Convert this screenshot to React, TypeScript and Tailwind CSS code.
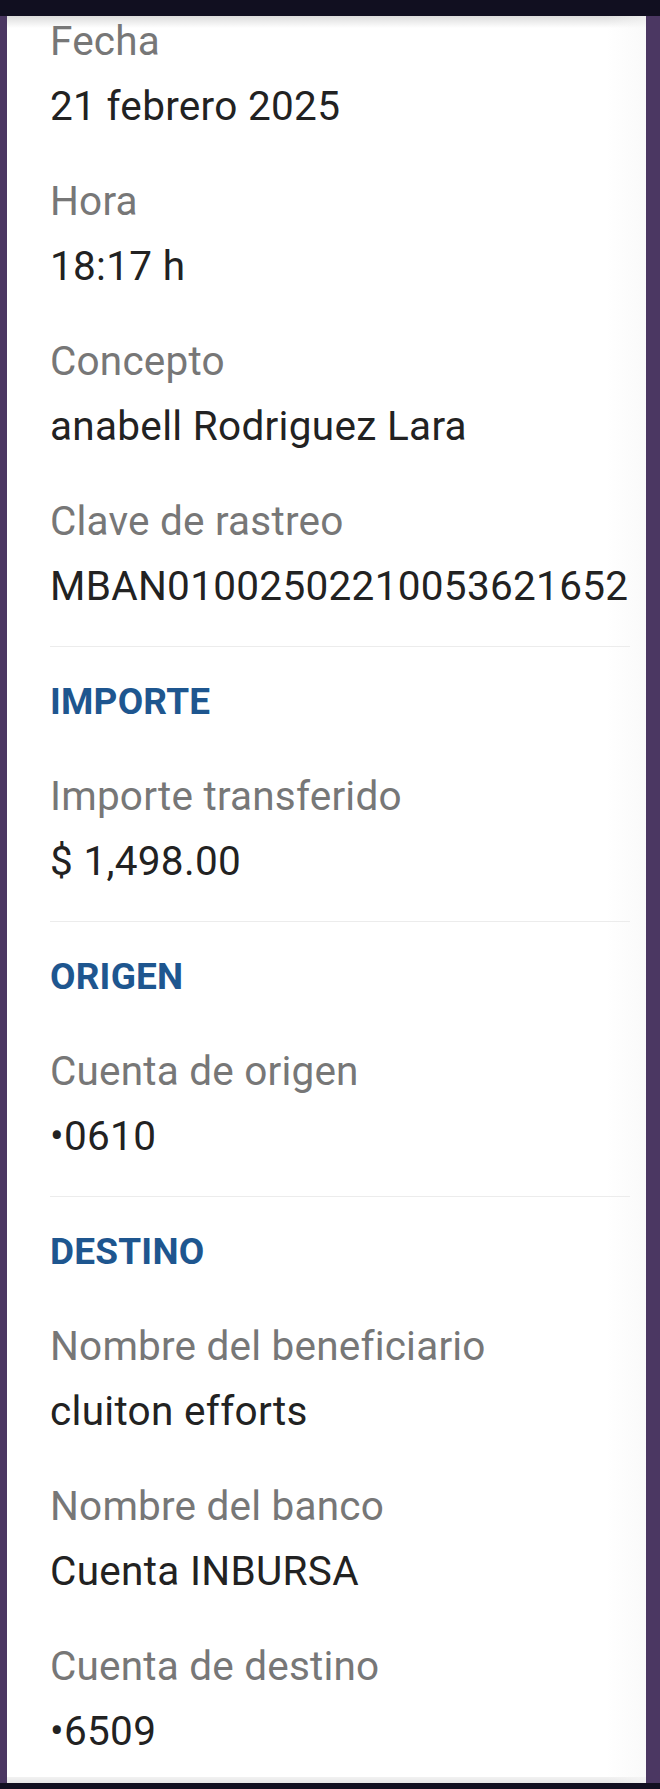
import React from 'react';

type Field = { label: string; value: string };

const general: Field[] = [
  { label: 'Fecha', value: '21 febrero 2025' },
  { label: 'Hora', value: '18:17 h' },
  { label: 'Concepto', value: 'anabell Rodriguez Lara' },
  { label: 'Clave de rastreo', value: 'MBAN01002502210053621652' },
];

const sections: { title: string; fields: Field[] }[] = [
  { title: 'IMPORTE', fields: [{ label: 'Importe transferido', value: '$ 1,498.00' }] },
  { title: 'ORIGEN', fields: [{ label: 'Cuenta de origen', value: '•0610' }] },
  {
    title: 'DESTINO',
    fields: [
      { label: 'Nombre del beneficiario', value: 'cluiton efforts' },
      { label: 'Nombre del banco', value: 'Cuenta INBURSA' },
      { label: 'Cuenta de destino', value: '•6509' },
    ],
  },
];

function FieldRow({ field }: { field: Field }) {
  return (
    <div className="flex flex-col gap-[15px]">
      <div className="text-[40.5px] leading-[50px] text-[#777777] tracking-[0.2px]">{field.label}</div>
      <div className="text-[40.5px] leading-[50px] text-[#222222] tracking-[0.3px]">{field.value}</div>
    </div>
  );
}

export default function App() {
  return (
    <div
      className="h-[1789px] w-[660px] flex flex-col bg-[#110f20] overflow-hidden"
      style={{ fontFamily: 'Roboto, "Noto Sans", Arial, sans-serif' }}
    >
      <div className="h-[16px] shrink-0 bg-[#110f20]" />

      <div className="flex-1 flex bg-[#4b3762] min-h-0">
        <div className="w-[7px] shrink-0" />
        <div className="relative w-[639px] flex flex-col bg-white">
          <div className="absolute top-0 left-0 right-0 h-[12px] bg-gradient-to-b from-[#dcdcdc] to-white/0" />
          <div className="absolute top-0 right-0 bottom-0 w-[40px] bg-gradient-to-r from-white/0 to-[#f6f6f6]/60" />

          <div className="relative flex-1 flex flex-col pl-[43px] pr-[16px]">
            <div className="flex flex-col gap-[45px]">
              {general.map((f) => (
                <FieldRow key={f.label} field={f} />
              ))}
            </div>

            {sections.map((s) => (
              <div key={s.title} className="flex flex-col">
                <div className="mt-[35px] h-px bg-[#ececec]" />
                <div className="mt-[33px] text-[37px] leading-[44px] font-bold text-[#1e568f] tracking-[0.2px]">
                  {s.title}
                </div>
                <div className="mt-[47px] flex flex-col gap-[45px]">
                  {s.fields.map((f) => (
                    <FieldRow key={f.label} field={f} />
                  ))}
                </div>
              </div>
            ))}
          </div>

          <div className="h-[6px] shrink-0 bg-gradient-to-b from-[#f2f2f2] to-[#e6e6e6]" />
        </div>
        <div className="flex-1" />
      </div>

      <div className="h-[6px] shrink-0 bg-[#110f20]" />
    </div>
  );
}
